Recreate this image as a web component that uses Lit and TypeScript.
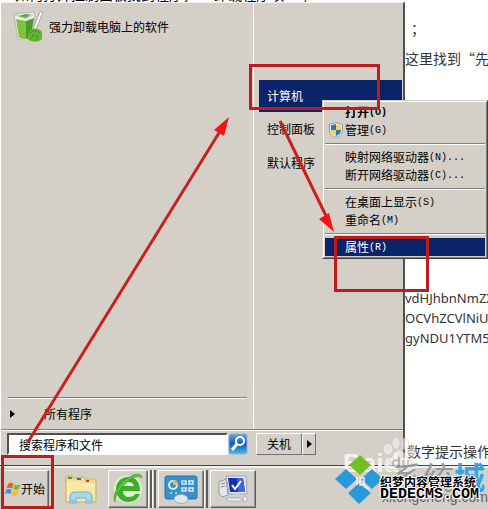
import { LitElement, html, css, svg } from "lit";
import { customElement } from "lit/decorators.js";

const base = css`
  :host,
  * {
    box-sizing: border-box;
  }
  button,
  input {
    font: inherit;
    color: inherit;
    margin: 0;
    padding: 0;
    border: 0;
    border-radius: 0;
    background: none;
    text-align: left;
  }
  svg {
    display: block;
  }
`;

interface Entry {
  label: string;
  key: string;
  tail?: string;
  kind?: string;
}

const groups: Entry[][] = [
  [
    { label: "打开", key: "(O)", kind: "bold" },
    { label: "管理", key: "(G)", kind: "shield" },
  ],
  [
    { label: "映射网络驱动器", key: "(N)", tail: "..." },
    { label: "断开网络驱动器", key: "(C)", tail: "..." },
  ],
  [
    { label: "在桌面上显示", key: "(S)" },
    { label: "重命名", key: "(M)" },
  ],
  [{ label: "属性", key: "(R)", kind: "selected" }],
];

const shield = svg`<svg width="16" height="16" viewBox="0 0 16 16">
  <path d="M8 0.5L14.5 2.5V8C14.5 12 11 14.5 8 15.5C5 14.5 1.5 12 1.5 8V2.5Z" fill="#e9edf0" stroke="#8d98a3"/>
  <path d="M8 2V8H3V3.5Z" fill="#3274b5"/><path d="M8 2L13 3.5V8H8Z" fill="#f0d45a"/>
  <path d="M3 8H8V14C5 13 3 11 3 8Z" fill="#f0d45a"/><path d="M13 8H8V14C11 13 13 11 13 8Z" fill="#3274b5"/>
</svg>`;

@customElement("context-menu")
export class ContextMenu extends LitElement {
  static styles = [
    base,
    css`
      :host {
        display: block;
        padding: 2px;
        background: #d4d0c8;
        border: 1px solid;
        border-color: #d4d0c8 #404040 #404040 #d4d0c8;
        box-shadow: inset 1px 1px #fff, inset -1px -1px #808080;
      }
      .group + .group {
        border-top: 1px solid #808080;
        box-shadow: inset 0 1px #fff;
        margin-top: 4px;
        padding-top: 4px;
      }
      .item {
        display: flex;
        align-items: center;
        width: 100%;
        height: 18px;
        line-height: 18px;
        white-space: nowrap;
      }
      .icon {
        width: 20px;
        padding-left: 3px;
        flex: none;
      }
      .key {
        font: 10px "Liberation Mono", monospace;
      }
      .bold,
      .bold .key {
        font-weight: bold;
      }
      .selected {
        background: #0a246a;
        color: #fff;
      }
    `,
  ];
  render() {
    return groups.map(
      (g) => html`<div class="group">
        ${g.map(
          (e) => html`<button class="item ${e.kind ?? ""}">
            <span class="icon">${e.kind === "shield" ? shield : ""}</span
            ><span>${e.label}</span><span class="key">${e.key}${e.tail ?? ""}</span>
          </button>`,
        )}
      </div>`,
    );
  }
}

const binIcon = svg`<svg width="34" height="34" viewBox="0 0 34 34">
  <path d="M3 4L23 2L24 8L20 26L7 30Z" fill="#eef2ea" stroke="#b4bbb0"/>
  <path d="M5 9L15 11V29L8 28Z" fill="#7fc243"/><path d="M15 11L23 8L20 25L15 29Z" fill="#4c9a26"/>
  <path d="M4 5L13 3L22 5L15 9Z" fill="#fff" stroke="#c3cbc0"/><path d="M7 6L14 4L20 5L15 8Z" fill="#64a840"/>
  <path d="M30 3L24 18" stroke="#aaa" stroke-width="4" stroke-linecap="round"/>
  <path d="M30 3L24 18" stroke="#fff" stroke-width="2" stroke-linecap="round"/>
  <path d="M18 22C20 18 26 17 31 22L31 29C27 33 20 32 16 29Z" fill="#62b72e"/>
  <path d="M19 23C22 20 26 20 29 23M20 29L23 24M26 30L26 25" stroke="#3f8b1b" fill="none"/>
</svg>`;

const searchIcon = svg`<svg width="20" height="22" viewBox="0 0 20 22">
  <defs><linearGradient id="s" x2="0" y2="1"><stop stop-color="#5aa4ea"/><stop offset=".5" stop-color="#1758b8"/><stop offset="1" stop-color="#42c4ee"/></linearGradient></defs>
  <rect x="1" y="1" width="18" height="20" rx="2" fill="url(#s)" stroke="#8fb0d0"/>
  <circle cx="12" cy="8" r="4" fill="none" stroke="#fff" stroke-width="2"/><path d="M9 11L4 17" stroke="#fff" stroke-width="3"/>
</svg>`;

const right = svg`<svg width="5" height="8" viewBox="0 0 5 8"><path d="M0 0L5 4L0 8Z" fill="#000"/></svg>`;

@customElement("start-menu")
export class StartMenu extends LitElement {
  static styles = [
    base,
    css`
      :host {
        display: flex;
        flex-direction: column;
        background: #d4d0c8;
        border-top: 1px solid #f4f2ee;
        border-left: 1px solid #fff;
        border-right: 2px solid #505050;
      }
      .panes {
        flex: 1;
        display: grid;
        grid-template-columns: 253px 1fr;
      }
      .left {
        display: flex;
        flex-direction: column;
        border-right: 1px solid #fff;
      }
      .app {
        display: flex;
        align-items: center;
        gap: 4px;
        padding: 7px 10px;
      }
      .fill {
        flex: 1;
      }
      .all {
        display: flex;
        align-items: center;
        gap: 29px;
        height: 32px;
        margin: 0 6px 0 7px;
        padding: 0 2px;
        border-top: 1px solid #808080;
        box-shadow: inset 0 1px #fff;
      }
      .places {
        display: flex;
        flex-direction: column;
        padding: 77px 1px 0 5px;
      }
      .place {
        height: 34px;
        padding-left: 8px;
      }
      .current {
        height: 32px;
        background: #0a246a;
        color: #fff;
      }
      .foot {
        display: flex;
        height: 36px;
        padding: 3px 6px;
        border-top: 1px solid #808080;
        box-shadow: inset 0 1px #fff;
      }
      .search {
        width: 221px;
        height: 22px;
        padding-left: 10px;
        background: #fff;
        border: 2px solid;
        border-color: #505050 #fff #fff #505050;
      }
      .search::placeholder {
        color: #000;
        opacity: 1;
      }
      .go {
        height: 22px;
      }
      .power {
        display: flex;
        height: 22px;
        margin-left: 8px;
      }
      .off,
      .more {
        width: 46px;
        text-align: center;
        border: 1px solid;
        border-color: #fff #707070 #707070 #fff;
      }
      .more {
        width: 14px;
        display: grid;
        place-items: center;
      }
    `,
  ];
  render() {
    return html`
      <div class="panes">
        <div class="left">
          <button class="app">${binIcon}<span>强力卸载电脑上的软件</span></button>
          <div class="fill"></div>
          <button class="all">${right}<span>所有程序</span></button>
        </div>
        <nav class="places">
          <button class="place current">计算机</button>
          <button class="place">控制面板</button>
          <button class="place">默认程序</button>
        </nav>
      </div>
      <div class="foot">
        <input class="search" aria-label="搜索程序和文件" placeholder="搜索程序和文件" />
        <button class="go" aria-label="搜索">${searchIcon}</button>
        <div class="power">
          <button class="off">关机</button><button class="more" aria-label="更多">${right}</button>
        </div>
      </div>
    `;
  }
}

const flag = svg`<svg width="16" height="16" viewBox="0 0 16 16">
  <path d="M3 3C5 1 7 2 8.500 3L7 7.500C5 6.500 3.500 6.500 1.500 7.500Z" fill="#e8602c"/>
  <path d="M9.500 3.500C11 4.500 13 4.500 15.500 3L14 7.800C12 9 10 8.800 8 8Z" fill="#7ab83a"/>
  <path d="M1.200 8.800C3 7.500 5 7.800 6.700 8.800L5.200 13.200C3.500 12 2 12 0 13Z" fill="#3f8fd8"/>
  <path d="M7.700 9.300C9.500 10.300 11.500 10.300 13.600 9L12 13.800C10 15 8 15 6.200 13.800Z" fill="#f5bf28"/>
</svg>`;

const folder = svg`<svg width="34" height="32" viewBox="0 0 34 32">
  <path d="M2 5L3 3H8L9 5H14L15 4H20L21 6L22 6H30L32 8V29H2Z" fill="#f3dc8c" stroke="#cfae54"/>
  <path d="M4 4H8V6H4Z" fill="#3c9c48"/><path d="M13 5H17V7H13Z" fill="#3569ad"/><path d="M22 7H25V9H22Z" fill="#b7452e"/>
  <path d="M3 8H15L17 10H31V28H3Z" fill="#f8e7a5"/><path d="M4 10V28M17 12H31" stroke="#fff5cb"/>
  <path d="M6 30V24Q6 19 11 19H23Q28 19 28 24V30H22V25H12V30Z" fill="#a8d8ee" stroke="#69afd2"/>
  <path d="M6 27H12V31H6ZM22 27H28V31H22Z" fill="#8bc8e6"/>
</svg>`;

const browser = svg`<svg width="32" height="32" viewBox="0 0 32 32">
  <circle cx="16" cy="16" r="14" fill="#dff2d5"/>
  <path d="M28 18H11C11 22 14 24 17 24C20 24 22 23 23 21H28C26 26 22 29 16 29C9 29 4 23 4 16C4 9 9 4 16 4C24 4 28 9 28 18ZM11 13H22C21 10 19 9 16.500 9C14 9 12 10 11 13Z" fill="#3fae2b"/>
  <path d="M3 29C-1 22 8 8 19 3C25 0 30 1 30 5C26 1 17 6 11 13C6 19 2 26 3 29Z" fill="#5cc53c" stroke="#2f9420" stroke-width=".6"/>
</svg>`;

const panel = svg`<svg width="34" height="30" viewBox="0 0 34 30">
  <rect x="1" y="2" width="32" height="23" rx="2" fill="#398fca" stroke="#2571aa"/>
  <circle cx="9" cy="11" r="4" fill="none" stroke="#d4edf9" stroke-width="2"/><path d="M9 11V6A5 5 0 0 1 14 11Z" fill="#f1b944"/>
  <path d="M18 7H22V10H18ZM25 7H29V10H25ZM18 14H22V17H18ZM25 14H29V17H25Z" fill="none" stroke="#d4edf9" stroke-width="1.500"/>
  <path d="M6 19H8M11 19H13" stroke="#9fe0a4" stroke-width="2"/>
  <ellipse cx="17" cy="25" rx="7" ry="4.500" fill="#dfe5ea" stroke="#9eacb8"/>
</svg>`;

const computer = svg`<svg width="32" height="30" viewBox="0 0 32 30">
  <path d="M2 8L9 5L11 21L5 23L2 20Z" fill="#e5e8ea" stroke="#929ca4"/><path d="M4 10L8 9M4 13L8 12" stroke="#7d8a94"/>
  <path d="M9 2L29 2L30 20L12 20Z" fill="#e7eaf0" stroke="#9aa2ab"/>
  <path d="M11 4L26 4L28 18L13 18Z" fill="#1431b4"/><path d="M20 4L26 4L28 18L21 18Z" fill="#3e68da"/>
  <path d="M15 11L18 15L24 7" fill="none" stroke="#fff" stroke-width="2"/>
  <path d="M17 20H23L25 24H16Z" fill="#cbd1d8"/><path d="M9 24H23L26 27H11Z" fill="#f2f3f5" stroke="#a7afb7"/>
  <ellipse cx="28" cy="25" rx="2" ry="3" fill="#eef0f3" stroke="#a7afb7"/>
</svg>`;

@customElement("task-bar")
export class TaskBar extends LitElement {
  static styles = [
    base,
    css`
      :host {
        display: flex;
        height: 44px;
        padding: 4px 1px 0;
        background: #d4d0c8;
        border-top: 1px solid #404040;
        box-shadow: inset 0 2px #f4f2ee;
      }
      .task,
      .start {
        display: flex;
        align-items: center;
        justify-content: center;
        height: 38px;
        border: 1px solid;
        border-color: #fff #606060 #606060 #fff;
        box-shadow: inset -1px -1px #909090;
      }
      .start {
        width: 48px;
        margin-right: 12px;
      }
      .plain {
        width: 40px;
        margin-right: 7px;
        border-color: transparent;
        box-shadow: none;
      }
      .task {
        flex: none;
      }
      .window {
        width: 40px;
      }
      .stack {
        width: 4px;
        height: 38px;
        border-right: 2px solid #606060;
        border-left: 1px solid #fff;
      }
      .gap {
        width: 2px;
      }
      .wide {
        width: 46px;
      }
    `,
  ];
  render() {
    return html`
      <button class="start">${flag}<span>开始</span></button>
      <button class="task plain" aria-label="资源管理器">${folder}</button>
      <button class="task window" aria-label="浏览器">${browser}</button>
      <span class="stack"></span><span class="stack"></span><span class="gap"></span>
      <button class="task wide" aria-label="控制面板">${panel}</button>
      <span class="stack"></span><span class="gap"></span>
      <button class="task wide" aria-label="计算机">${computer}</button>
    `;
  }
}

@customElement("site-marks")
export class SiteMarks extends LitElement {
  static styles = [
    base,
    css`
      :host {
        display: block;
        width: 146px;
        height: 76px;
      }
      .baidu,
      .paw,
      .city,
      .site,
      .cms,
      .tiles {
        position: absolute;
        white-space: nowrap;
      }
      .baidu {
        left: 1px;
        top: 14px;
        font: bold 26px/32px "Liberation Sans", sans-serif;
        color: #f4f2ee;
      }
      .paw {
        left: 39px;
        top: 2px;
        opacity: 0.6;
      }
      .city {
        left: 50px;
        top: 26px;
        font: 31px/34px "Noto Sans CJK SC", sans-serif;
        color: #96979a;
      }
      .blue {
        color: #36a6e3;
        font-weight: bold;
      }
      .site {
        left: 40px;
        top: 55px;
        font: 14px/18px "Liberation Sans", sans-serif;
        color: #666;
      }
      .tiles {
        left: 0;
        top: 22px;
        overflow: visible;
      }
      .cms {
        left: 38px;
        top: 42px;
        font: bold 12px/14px "Noto Sans CJK SC", sans-serif;
        color: #000;
        text-shadow: 1px 0 #fff, -1px 0 #fff, 0 1px #fff, 0 -1px #fff, 1px 1px #fff, -1px -1px #fff;
      }
      .latin {
        display: block;
        font: bold 15px/12px "Liberation Mono", monospace;
      }
    `,
  ];
  render() {
    return html`
      <span class="baidu">Baidu</span>
      <svg class="paw" width="42" height="38" viewBox="0 0 42 38">
        <g fill="#f4f4f4" stroke="#c8c8c8">
          <ellipse cx="7" cy="14" rx="5" ry="6" /><ellipse cx="15" cy="8" rx="4" ry="6" />
          <ellipse cx="24" cy="9" rx="4" ry="6" /><ellipse cx="31" cy="17" rx="4" ry="5" />
          <path d="M18 15C23 15 25 21 29 25C33 30 30 36 25 35C21 34 17 34 12 35C5 36 3 29 8 25C12 21 13 15 18 15Z" />
        </g>
        <g fill="none" stroke="#a5a5a5" stroke-width="2">
          <circle cx="15" cy="28" r="3" /><path d="M18 22V31M22 25V31H27V25" />
        </g>
      </svg>
      <span class="city">系统<span class="blue">城</span></span>
      <span class="site">xitongcheng.com</span>
      <svg class="tiles" width="40" height="50" viewBox="0 0 40 50">
        <path d="M18 0L29 10L18 20L7 10Z" fill="#77bd27" />
        <path d="M4 14L15 24L4 34L-7 24ZM30 14L41 24L30 34L19 24ZM17 28L29 38L17 49L6 38Z" fill="#289ad9" />
        <path d="M15 22V30M18 23H22V30H18ZM22 31L27 34" fill="none" stroke="#f3f3f3" stroke-width="1.500" />
      </svg>
      <span class="cms">织梦内容管理系统<span class="latin">DEDECMS.COM</span></span>
    `;
  }
}

@customElement("app-root")
export class AppRoot extends LitElement {
  static styles = [
    base,
    css`
      :host {
        display: flex;
        flex-direction: column;
        position: relative;
        min-height: 100vh;
        overflow: hidden;
        background: #fff;
        color: #000;
        font: 12px/16px "Noto Sans CJK SC", sans-serif;
      }
      .desk {
        flex: 1;
        display: flex;
      }
      .column {
        flex: none;
        width: 405px;
        display: flex;
        flex-direction: column;
      }
      .above {
        height: 2px;
        display: flex;
        align-items: flex-end;
        overflow: hidden;
        padding-left: 15px;
        font-size: 14px;
        white-space: nowrap;
      }
      .menu {
        flex: 1;
      }
      .page {
        flex: 1;
        width: 0;
        overflow: hidden;
        white-space: nowrap;
        color: #333;
        font: 14px/20px "Noto Sans CJK SC", sans-serif;
      }
      .line {
        margin: 0;
      }
      .first {
        padding: 18px 0 10px 6px;
      }
      .code {
        padding: 220px 0 93px;
        font: 13px/20px "Noto Sans", sans-serif;
      }
      .last {
        padding-left: 2px;
      }
      .popup,
      .marks,
      .box,
      .arrows {
        position: absolute;
      }
      .popup {
        left: 322px;
        top: 100px;
        width: 166px;
      }
      .marks {
        left: 342px;
        top: 433px;
      }
      .arrows {
        left: 0;
        top: 0;
        pointer-events: none;
      }
      .box {
        border: 3px solid #c01c1c;
        pointer-events: none;
      }
      .place {
        left: 249px;
        top: 64px;
        width: 131px;
        height: 46px;
      }
      .prop {
        left: 334px;
        top: 236px;
        width: 95px;
        height: 56px;
      }
      .begin {
        left: 1px;
        top: 455px;
        width: 53px;
        height: 54px;
      }
    `,
  ];
  render() {
    return html`
      <main class="desk" lang="zh-CN">
        <div class="column">
          <div class="above">如何打开控制面板找到程序， “卸载程序项” ；</div>
          <start-menu class="menu"></start-menu>
        </div>
        <article class="page">
          <p class="line first">；</p>
          <p class="line">这里找到“先</p>
          <p class="line code">vdHJhbnNmZXI<br />OCVhZCVlNiU5<br />gyNDU1YTM5</p>
          <p class="line last">数字提示操作</p>
        </article>
      </main>
      <task-bar></task-bar>
      <context-menu class="popup"></context-menu>
      <site-marks class="marks"></site-marks>
      <svg class="arrows" width="488" height="509" viewBox="0 0 488 509">
        <g stroke="#c8201c" stroke-width="3"><path d="M28 442L222 128" /><path d="M280 121L328 220" /></g>
        <g fill="#f01414"><path d="M229 117L224 136L214 130Z" /><path d="M334 232L319 219L329 213Z" /></g>
      </svg>
      <div class="box place"></div>
      <div class="box prop"></div>
      <div class="box begin"></div>
    `;
  }
}
